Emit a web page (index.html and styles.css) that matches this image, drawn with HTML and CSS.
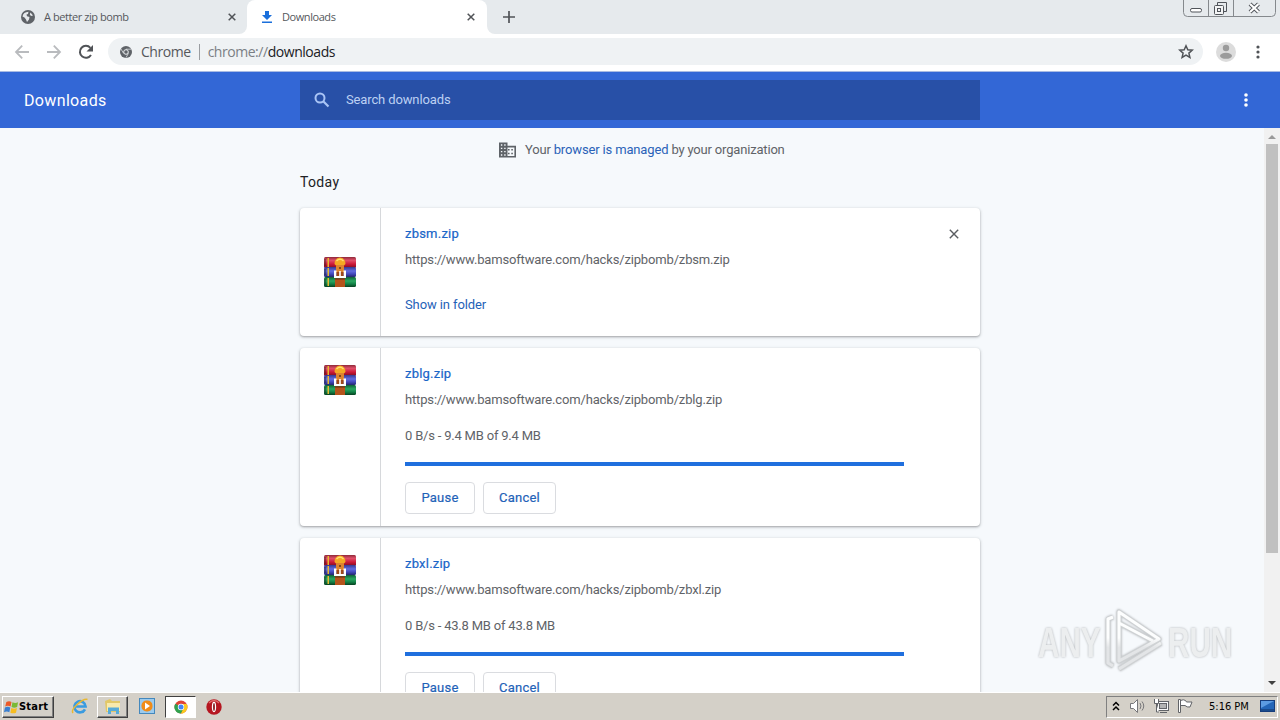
FILE: index.html
```html
<!DOCTYPE html>
<html lang="en">
<head>
<meta charset="utf-8">
<title>Downloads</title>
<link rel="stylesheet" href="styles.css">
</head>
<body>
<svg width="0" height="0" class="defs">
  <defs>
    <linearGradient id="red" x2="0" y2="1"><stop offset="0" stop-color="#8e2838"/><stop offset=".3" stop-color="#e0506a"/><stop offset=".65" stop-color="#cc1838"/><stop offset="1" stop-color="#7c0c20"/></linearGradient>
    <linearGradient id="blue" x2="0" y2="1"><stop offset="0" stop-color="#343a90"/><stop offset=".4" stop-color="#626ce0"/><stop offset=".7" stop-color="#4248bc"/><stop offset="1" stop-color="#24286c"/></linearGradient>
    <linearGradient id="green" x2="0" y2="1"><stop offset="0" stop-color="#106038"/><stop offset=".4" stop-color="#2aa860"/><stop offset=".7" stop-color="#128046"/><stop offset="1" stop-color="#084020"/></linearGradient>
    <symbol id="rar" viewBox="0 0 32 32">
      <rect x="0" y="1" width="32" height="11" rx="1.5" fill="url(#red)"/>
      <rect x="0" y="11" width="32" height="10" rx="1.5" fill="url(#blue)"/>
      <rect x="0" y="21" width="32" height="10" rx="1.5" fill="url(#green)"/>
      <path d="M0 3h2v7H0zM0 13h2v6H0zM0 23h2v6H0z" fill="#222" opacity=".4"/>
      <path d="M3.500 2H5v9H3.500zM3.500 12H5v8H3.500zM3.500 22H5v8H3.500z" fill="#e8b830"/>
      <path d="M10.500 8q0-6 5.500-6.500Q21.500 2 21.500 8L20 9.500h-8z" fill="#f4a824"/>
      <path d="M12.500 5q3.500-3.500 7 0" stroke="#ffe070" stroke-width="1.500" fill="none"/>
      <path d="M12 9h8v8h-8z" fill="#dd8430"/>
      <circle cx="16" cy="12" r="1" fill="#603010"/>
      <path d="M10 14.500h2.500V20h7v-5.500H22V22H10z" fill="#fff"/>
      <path d="M12.500 16h7v4h-7z" fill="#a04818"/>
      <path d="M15.200 15h1.600v5h-1.600z" fill="#fff"/>
      <path d="M11 22.500h10V31H11z" fill="#b5541c"/>
      <path d="M11 22.500h10v1H11z" fill="#6a2c10"/>
    </symbol>
  </defs>
</svg>
<div class="screen">
  <div class="tabstrip">
    <div class="tab tab-idle">
      <svg class="favicon" viewBox="0 0 16 16"><circle cx="8" cy="8" r="7" fill="#5f6368"/><path d="M2.500 7.500C3 4.500 5 3 8.500 2.800L8 5 6.500 5.500 7 7.200 9.500 8 9 10.500 7 13 6 10.500 4.500 8.500zM10.500 3.500L13 6.500 11 7 9.800 5.500z" fill="#e7eaed"/></svg>
      <span class="tab-title t1">A better zip bomb</span>
      <svg class="tab-close" viewBox="0 0 8 8"><path d="M.7.7l6.600 6.600M7.300.7L.7 7.300"/></svg>
    </div>
    <div class="tab tab-active">
      <svg class="favicon" viewBox="0 0 16 16"><path d="M6 2h4v4h3L8 11 3 6h3zM3 12.500h10v1.500H3z" fill="#1a6fdb"/></svg>
      <span class="tab-title t2">Downloads</span>
      <svg class="tab-close" viewBox="0 0 8 8"><path d="M.7.7l6.600 6.600M7.300.7L.7 7.300"/></svg>
    </div>
    <div class="strip-rest">
      <svg class="newtab" viewBox="0 0 12 12"><path d="M6 0v12M0 6h12" stroke="#505357" stroke-width="1.700"/></svg>
      <svg class="winbtns" viewBox="0 0 94 18" fill="none" stroke="#85898d"><path d="M.5 0v12.500q0 4 4 4h84q4 0 4-4V0M25.500 0v16M50.500 0v16" /><g stroke="#50545a"><rect x="7.500" y="8.500" width="11" height="3.500" rx="1.500" fill="#fff"/><path d="M34.500 5V2.500h9v9H41"/><rect x="31.500" y="5.500" width="9" height="9" rx="1" fill="#f3f4f5"/><rect x="34.500" y="8.500" width="3" height="3"/></g><path d="M67 4l8.500 8M75.500 4L67 12" stroke="#50545a" stroke-width="4"/><path d="M67 4l8.500 8M75.500 4L67 12" stroke="#fff" stroke-width="2.200"/></svg>
    </div>
  </div>
  <div class="toolbar">
    <svg class="nav" viewBox="0 0 16 16" fill="none" stroke="#b9bbbe" stroke-width="1.800"><path d="M15 8H2M8.200 1.700L2 8l6.200 6.300"/></svg>
    <svg class="nav" viewBox="0 0 16 16" fill="none" stroke="#b9bbbe" stroke-width="1.800"><path d="M1 8h13M7.800 1.700L14 8l-6.200 6.300"/></svg>
    <svg class="nav" viewBox="0 0 16 16"><path d="M13 11a6 6 0 1 1-.6-7.200" fill="none" stroke="#505357" stroke-width="2"/><path d="M15 1v6.500H8.500z" fill="#505357"/></svg>
    <div class="omnibox">
      <svg class="site" viewBox="0 0 12 12"><circle cx="6" cy="6" r="6" fill="#5f6368"/><circle cx="6" cy="6" r="2.300" fill="#5f6368" stroke="#eef1f3" stroke-width="1"/><path d="M6 3.200h5.300M3.600 7.400L1 3M8.400 7.400L6 11.600" stroke="#eef1f3" stroke-width=".7"/></svg>
      <span class="origin">Chrome</span><span class="bar"></span><span class="url"><span class="scheme">chrome://</span>downloads</span>
      <svg class="star" viewBox="0 0 16 16"><path d="M8 1.800l1.800 4 4.400.4-3.300 2.900 1 4.300L8 11.100l-3.900 2.300 1-4.300L1.800 6.200l4.400-.4z" fill="none" stroke="#505357" stroke-width="1.500"/></svg>
    </div>
    <svg class="avatar" viewBox="0 0 20 20"><circle cx="10" cy="10" r="10" fill="#dcdcdc"/><circle cx="10" cy="6" r="3.200" fill="#9b9b9b"/><ellipse cx="10" cy="13.800" rx="6" ry="3" fill="#9b9b9b"/></svg>
    <svg class="dots" viewBox="0 0 4 14" fill="#505357"><circle cx="2" cy="2" r="1.600"/><circle cx="2" cy="7" r="1.600"/><circle cx="2" cy="12" r="1.600"/></svg>
  </div>
  <div class="header">
    <span class="heading">Downloads</span>
    <div class="search">
      <svg viewBox="0 0 16 16" class="glass" fill="none" stroke="#a9c4f5"><circle cx="6" cy="6" r="4.500" stroke-width="2"/><path d="M9.500 9.500l5 5" stroke-width="2.200"/></svg>
      <span class="placeholder">Search downloads</span>
    </div>
    <svg class="hdots" viewBox="0 0 4 14" fill="#fff"><circle cx="2" cy="2" r="1.800"/><circle cx="2" cy="7" r="1.800"/><circle cx="2" cy="12" r="1.800"/></svg>
  </div>
  <div class="content">
    <div class="list">
      <div class="managed">
        <svg viewBox="0 0 18 16" class="building"><path d="M0 0h9v3.500h9V16H0z" fill="#5f6368"/><path d="M2 2h1.500v1.500H2zM5.500 2H7v1.500H5.500zM2 5.500h1.500V7H2zM5.500 5.500H7V7H5.500zM2 9h1.500v1.500H2zM5.500 9H7v1.500H5.500zM2 12.500h1.500V14H2zM5.500 12.500H7V14H5.500zM9 5.300h7.300v9H9z" fill="#f6f9fc"/><path d="M9.500 7h1.700v1.600H9.500zM13 7h1.700v1.600H13zM9.500 10.800h1.700v1.600H9.500zM13 10.800h1.700v1.600H13z" fill="#5f6368"/></svg>
        <span class="managed-text">Your <a>browser is managed</a> by your organization</span>
      </div>
      <div class="today">Today</div>
      <div class="card card-done">
        <div class="thumb"><svg class="rar"><use href="#rar"/></svg></div>
        <div class="body">
          <div class="name">zbsm.zip</div>
          <div class="link">https://www.bamsoftware.com/hacks/zipbomb/zbsm.zip</div>
          <div class="show">Show in folder</div>
        </div>
        <svg class="remove" viewBox="0 0 10 10"><path d="M.8.800l8.400 8.400M9.200.8L.8 9.200" stroke="#5a5d61" stroke-width="1.400"/></svg>
      </div>
      <div class="card card-busy">
        <div class="thumb"><svg class="rar"><use href="#rar"/></svg></div>
        <div class="body">
          <div class="name">zblg.zip</div>
          <div class="link">https://www.bamsoftware.com/hacks/zipbomb/zblg.zip</div>
          <div class="status">0 B/s - 9.4 MB of 9.4 MB</div>
          <div class="progress"></div>
          <div class="actions"><span class="btn pause">Pause</span><span class="btn cancel">Cancel</span></div>
        </div>
      </div>
      <div class="card card-busy">
        <div class="thumb"><svg class="rar"><use href="#rar"/></svg></div>
        <div class="body">
          <div class="name">zbxl.zip</div>
          <div class="link">https://www.bamsoftware.com/hacks/zipbomb/zbxl.zip</div>
          <div class="status">0 B/s - 43.8 MB of 43.8 MB</div>
          <div class="progress"></div>
          <div class="actions"><span class="btn pause">Pause</span><span class="btn cancel">Cancel</span></div>
        </div>
      </div>
    </div>
    <div class="scrollbar">
      <svg class="arrow" viewBox="0 0 16 16"><path d="M4 11l4-4 4 4z" fill="#9a9a9a"/></svg>
      <div class="thumbbar"></div>
      <svg class="arrow down" viewBox="0 0 16 16"><path d="M4 5h8l-4 4z" fill="#404040"/></svg>
    </div>
    <div class="watermark">
      <span class="word">ANY</span>
      <svg viewBox="0 0 58 64" class="play" fill="none" stroke-linejoin="round">
        <defs><linearGradient id="fade" gradientUnits="userSpaceOnUse" x1="0" y1="0" x2="0" y2="64"><stop offset=".45" stop-color="#fdfefe"/><stop offset=".6" stop-color="#e3e5e7"/></linearGradient></defs>
        <g stroke="#cfd2d4" stroke-width="5"><path d="M8 8L3 10v44l5 3M14 3v49L54 30zM14 14l34 18M14 60l42-26"/></g><g stroke="url(#fade)" stroke-width="3"><path d="M8 8L3 10v44l5 3M14 3v49L54 30zM14 14l34 18M14 60l42-26"/></g></svg>
      <span class="word">RUN</span>
    </div>
  </div>
  <div class="taskbar">
    <div class="start">
      <svg viewBox="0 0 16 16" class="flag"><path d="M2.500 2q3-1.500 5.500 0L7 7Q4 5.500 1.300 7z" fill="#ec5a28"/><path d="M9 2.500q3 1.500 6 0L14 7.500q-3 1.500-6 0z" fill="#7bb935"/><path d="M1 8q3-1.500 5.700 0l-1 5Q3 11.500 0 13z" fill="#3a7fd0"/><path d="M7.800 8.500q3 1.500 6 0l-1 5q-3 1.500-6 0z" fill="#f7bd20"/></svg>
      <span class="start-text">Start</span>
    </div>
    <svg class="ie" viewBox="0 0 18 18" fill="none"><path d="M14 12.300A5.600 5.600 0 1 1 14.600 9.500H4.500" stroke="#3a9be0" stroke-width="2.600"/><path d="M2 16C-1 12 12 1 16.500 2.500" stroke="#e9b830" stroke-width="1.500"/></svg>
    <div class="task raised"><svg viewBox="0 0 18 16"><path d="M1 2l5-2 2 2h8v11H2z" fill="#e2c868"/><path d="M3 4h13v8H3z" fill="#f8eaad"/><path d="M4 15V8.500h11V15h-3v-3H7v3z" fill="#57abd8"/></svg></div>
    <svg class="wmp" viewBox="0 0 16 16"><rect x=".5" y=".5" width="15" height="15" fill="#9ccbee" stroke="#4488bd"/><rect x="2.500" y="2.500" width="11" height="11" rx="5" fill="#f08c18"/><path d="M6 4.500v7L11 8z" fill="#fff"/></svg>
    <div class="task pressed"><svg viewBox="0 0 14 14"><circle cx="7" cy="7" r="6.500" fill="#e04435"/><path d="M7 7L1.300 3.700A6.500 6.500 0 0 0 7 13.500l3-5.200z" fill="#2fa24f"/><path d="M7 7h3l-3 6.500A6.500 6.500 0 0 0 12.700 4H7z" fill="#fbc91e"/><circle cx="7" cy="7" r="3.200" fill="#fff"/><circle cx="7" cy="7" r="2.500" fill="#4285f4"/></svg></div>
    <svg class="opera" viewBox="0 0 16 16"><circle cx="8" cy="8" r="7.700" fill="#b51620"/><path d="M3 4q5-5 10 0" stroke="#df6a6a" stroke-width="1.500" fill="none"/><ellipse cx="8" cy="8" rx="1.500" ry="4.700" fill="#7b070d" stroke="#fff" stroke-width="1.300"/></svg>
    <div class="tray">
      <svg class="chev" viewBox="0 0 8 10" fill="none" stroke="#000" stroke-width="1.500"><path d="M1 4.500l3-3 3 3M1 9l3-3 3 3"/></svg>
      <svg class="spk" viewBox="0 0 18 16" fill="none" stroke="#77777a"><path d="M1.500 5.500h3l4-4v13l-4-4h-3z" fill="#fff"/><path d="M11 5q2 3 0 6M13 3.500q3.500 4.500 0 9"/></svg>
      <svg class="net" viewBox="0 0 16 16" stroke="#626468"><rect x="4.500" y="3.500" width="11" height="9" fill="#f8f8f8"/><rect x="6.500" y="5.500" width="7" height="5" fill="#b4b4b4"/><path d="M7 14.500h7" /><path d="M1.500 1v4.500h4V1M3.500 5.500V14H6" fill="#fff"/></svg>
      <svg class="flg" viewBox="0 0 16 16" fill="#fff" stroke="#626468"><path d="M1.500 1.500h2v13h-2zM3.500 2.500q3-1.500 5 0l1 1.500h5.500l-2 5q-3 .500-5-1.500H3.500z"/></svg>
      <span class="clock">5:16 PM</span>
      <svg class="desk" viewBox="0 0 15 12"><rect x=".5" y=".5" width="14" height="11" fill="#2466b8" stroke="#163d7c"/><path d="M1 1h13L1 8z" fill="#5d9ce2"/><path d="M1 10h13" stroke="#113060"/></svg>
    </div>
  </div>
</div>
</body>
</html>
```
FILE: styles.css
```css
* { box-sizing: border-box; }
body { margin: 0; font-family: Roboto, "Liberation Sans", sans-serif; font-size: 13px; }
svg { display: block; flex: none; }
.defs { position: absolute; }
.screen { width: 1280px; height: 720px; display: flex; flex-direction: column; overflow: hidden; background: #fff; }
span, .name, .link, .show, .status { white-space: nowrap; }

.tabstrip { height: 34px; flex: none; background: #fff; display: flex; }
.tab { display: flex; align-items: center; height: 34px; color: #55585c; font: 11px "Open Sans", sans-serif; letter-spacing: -.43px; }
.tab-title { padding-bottom: 2px; }
.tab-idle { width: 247px; padding: 0 11px 0 20px; background: #e6eaed; border-bottom-right-radius: 8px; }
.tab-active { width: 240px; padding: 0 12px; background: #fff; border-radius: 8px 8px 0 0; box-shadow: 0 -8px #e6eaed; }
.t1 { margin-left: 1px; }
.strip-rest { flex: 1; display: flex; background: #e6eaed; border-bottom-left-radius: 8px; }
.favicon { width: 16px; height: 16px; margin-right: 7px; }
.tab-close { width: 8px; height: 8px; margin-left: auto; stroke: #505357; stroke-width: 1.500; }
.newtab { width: 12px; height: 12px; margin: 11px 0 0 16px; }
.winbtns { width: 94px; height: 18px; margin-left: auto; margin-right: 3px; }

.toolbar { height: 38px; flex: none; display: flex; align-items: center; padding: 0 20px 2px 14px; border-bottom: 1px solid #a9bbe3; background: #fff; }
.nav { width: 16px; height: 16px; margin-right: 16px; }
.omnibox { width: 1095px; height: 27px; margin-left: -2px; border-radius: 14px; background: #eff2f4; display: flex; align-items: center; padding: 0 9px 0 12px; font: 14px "Open Sans", sans-serif; letter-spacing: -.46px; color: #202124; }
.site { width: 12px; height: 12px; margin-right: 9px; }
.origin { color: #55585c; }
.bar { width: 1px; height: 16px; background: #9a9da1; margin: 0 8px; }
.scheme { color: #7b7f84; }
.star { width: 16px; height: 16px; margin-left: auto; }
.avatar { width: 20px; height: 20px; margin-left: 13px; }
.dots { width: 4px; height: 14px; margin-left: 20px; }

.header { height: 56px; flex: none; display: flex; align-items: center; background: #3367d6; color: #fff; padding: 0 32px 0 24px; }
.heading { width: 276px; font-size: 16px; letter-spacing: .35px; }
.search { width: 680px; height: 40px; background: #2850a7; display: flex; align-items: center; padding-left: 14px; color: #bdd0f3; }
.placeholder { letter-spacing: -.13px; padding-bottom: 2px; }
.glass { width: 16px; height: 16px; margin-right: 16px; }
.hdots { width: 4px; height: 14px; margin-left: auto; }

.content { position: relative; height: 564px; flex: none; display: flex; background: #f6f9fc; overflow: hidden; }
.list { width: 680px; margin-left: 300px; }
.managed { display: flex; align-items: center; height: 44px; padding-left: 199px; color: #5f6368; }
.managed-text { letter-spacing: -.18px; padding-bottom: 2px; }
.building { width: 17px; height: 16px; margin-right: 9px; }
.managed a { color: #2a62b8; letter-spacing: -.15px; }
.today { height: 36px; padding-top: 2px; font-size: 14px; line-height: 17px; letter-spacing: .35px; color: #202124; }
.card { display: flex; position: relative; background: #fff; border-radius: 4px; margin-bottom: 12px; box-shadow: 0 1px 2px rgba(60,64,67,.35), 0 1px 3px 1px rgba(60,64,67,.12); }
.card-done { height: 128px; }
.card-busy { height: 178px; }
.thumb { width: 81px; border-right: 1px solid #d6d8db; display: flex; justify-content: center; padding-top: 16px; }
.card-done .thumb { padding-top: 48px; }
.rar { width: 32px; height: 32px; }
.body { padding: 17px 0 0 24px; width: 523px; }
.name { height: 26px; line-height: 18px; color: #1a66c8; letter-spacing: .22px; -webkit-text-stroke: .2px #1a66c8; }
.link { line-height: 18px; color: #5f6368; letter-spacing: -.16px; }
.show { margin-top: 27px; line-height: 18px; color: #1f62b8; letter-spacing: -.1px; }
.status { margin-top: 18px; line-height: 18px; color: #5f6368; letter-spacing: -.2px; }
.progress { height: 4px; margin-top: 17px; background: #1f6fde; }
.actions { display: flex; gap: 8px; margin-top: 16px; }
.btn { height: 32px; padding-bottom: 2px; display: flex; align-items: center; justify-content: center; border: 1px solid #dadce0; border-radius: 4px; color: #1f62b8; letter-spacing: .2px; -webkit-text-stroke: .2px #1f62b8; }
.pause { width: 70px; }
.cancel { width: 73px; }
.remove { position: absolute; right: 21px; top: 21px; width: 10px; height: 10px; }
.scrollbar { margin-left: auto; width: 16px; background: #f1f1f1; display: flex; flex-direction: column; }
.arrow { width: 16px; height: 16px; }
.thumbbar { width: 12px; height: 409px; margin-left: 2px; background: #c0c0c0; }
.down { margin-top: auto; }
.watermark { position: absolute; left: 1038px; top: 481px; width: 196px; height: 64px; display: flex; align-items: center; color: #eceeef; font: 700 43px "Liberation Sans", sans-serif; filter: drop-shadow(0 0 1px #b0b3b6); }
.word { width: 64px; padding-top: 2px; transform-origin: left; transform: scaleX(.69); }
.play { width: 58px; height: 64px; margin: 0 5px 0 3px; }

.taskbar { height: 28px; flex: none; background: #d4d0c8; box-shadow: inset 0 1px #fff; display: flex; align-items: center; padding: 2px 2px 0; color: #000; }
.start { width: 52px; height: 22px; display: flex; align-items: center; border: 1px solid; border-color: #fff #404040 #404040 #fff; box-shadow: inset -1px -1px #808080; }
.flag { width: 15px; height: 15px; margin: 0 0 0 1px; }
.start-text { font: 700 11px "DejaVu Sans Condensed", "DejaVu Sans", sans-serif; letter-spacing: .2px; padding-bottom: 1px; }
.ie { width: 18px; height: 18px; margin: 0 0 2px 17px; }
.task { display: flex; align-items: center; justify-content: center; height: 22px; width: 31px; border: 1px solid; }
.raised { margin-left: 8px; border-color: #fff #404040 #404040 #fff; box-shadow: inset -1px -1px #808080; }
.raised svg { width: 18px; height: 16px; }
.wmp { width: 16px; height: 16px; margin: 0 0 2px 11px; }
.pressed { margin-left: 10px; background: #fff; border-color: #404040 #fff #fff #404040; }
.pressed svg { width: 14px; height: 14px; }
.opera { width: 16px; height: 16px; margin: 0 0 1px 10px; }
.tray { margin-left: auto; width: 172px; height: 22px; display: flex; align-items: center; border: 1px solid; border-color: #808080 #fff #fff #808080; padding: 0 0 2px 5px; }
.chev { width: 8px; height: 10px; }
.spk { width: 18px; height: 16px; margin-left: 9px; }
.net { width: 16px; height: 16px; margin-left: 6px; }
.flg { width: 16px; height: 16px; margin-left: 8px; }
.clock { width: 42px; margin-left: 16px; font: 11px "DejaVu Sans Condensed", sans-serif; }
.desk { width: 15px; height: 12px; margin-left: 9px; }
```
